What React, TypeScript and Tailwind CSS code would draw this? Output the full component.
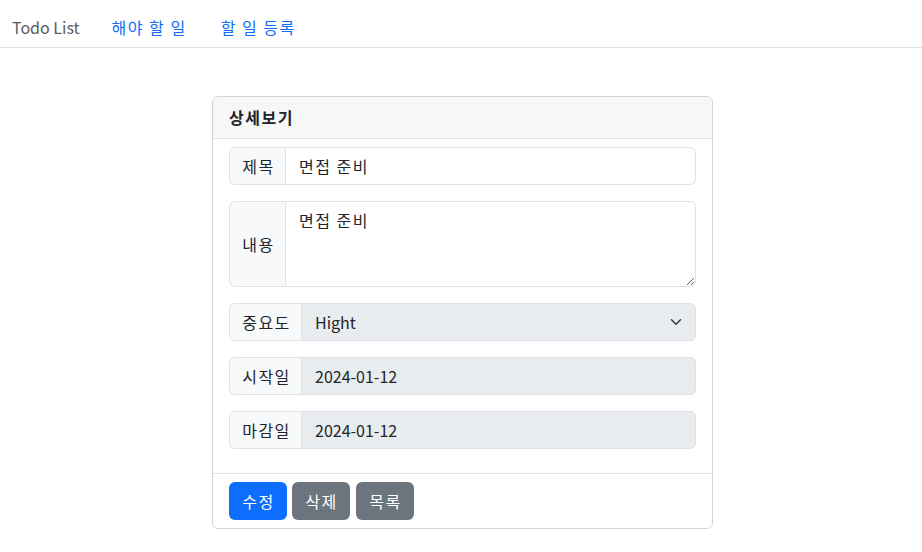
import React from "react";

const font = { fontFamily: '"Noto Sans CJK KR", "Noto Sans", sans-serif' };
const ko = { fontFamily: '"Noto Sans CJK KR", "Noto Sans", sans-serif', letterSpacing: "1.5px" };

function Chevron() {
  return (
    <svg width="16" height="12" viewBox="0 0 16 16" className="pointer-events-none absolute right-[12px] top-1/2 -translate-y-1/2">
      <path d="m2 5 6 6 6-6" fill="none" stroke="#343a40" strokeWidth="2" strokeLinecap="round" strokeLinejoin="round" />
    </svg>
  );
}

function Label({ children, w }: { children: React.ReactNode; w: string }) {
  return (
    <div
      className={`flex items-center justify-center ${w} shrink-0 border border-[#dee2e6] bg-[#f8f9fa] rounded-l-[6px] pl-[13px] pr-[11px] text-[16px] leading-[24px] text-[#212529] whitespace-nowrap`}
      style={ko}
    >
      {children}
    </div>
  );
}

export default function App() {
  return (
    <div className="min-h-[552px] bg-white text-[#212529]" style={font}>
      <nav className="flex items-start h-[48px] border-b border-[#dee2e6] pt-[15px] pl-[12px] text-[16px] leading-[24px]">
        <span className="text-[#595c5f]">Todo List</span>
        <a className="ml-[32px] text-[#0d6efd]" style={ko}>해야 할 일</a>
        <a className="ml-[34px] text-[#0d6efd]" style={ko}>할 일 등록</a>
      </nav>

      <div className="flex justify-center pl-[3px]">
        <div className="w-[501px] mt-[48px] border border-[#d3d4d5] rounded-[6px] overflow-hidden">
          <div className="h-[42px] bg-[#f7f7f8] border-b border-[#dee2e6] px-[16px] py-[8px] text-[16px] leading-[24px] font-bold" style={ko}>
            상세보기
          </div>
          <div className="px-[16px] pt-[8px] pb-[8px] flex flex-col gap-[16px]">
            <div className="flex h-[38px]">
              <Label w="w-[57px]">제목</Label>
              <input
                readOnly
                value="면접 준비"
                className="flex-1 min-w-0 border border-l-0 border-[#dee2e6] rounded-r-[6px] px-[13px] text-[16px] leading-[24px] text-[#212529] bg-white outline-none"
                style={ko}
              />
            </div>
            <div className="flex h-[86px]">
              <Label w="w-[57px]">내용</Label>
              <textarea
                readOnly
                value="면접 준비"
                className="flex-1 min-w-0 border border-l-0 border-[#dee2e6] rounded-r-[6px] px-[13px] py-[6px] text-[16px] leading-[24px] text-[#212529] bg-white outline-none"
                style={ko}
              />
            </div>
            <div className="flex h-[38px]">
              <Label w="w-[73px]">중요도</Label>
              <div className="relative flex-1 min-w-0">
                <select
                  disabled
                  className="w-full h-full appearance-none border border-l-0 border-[#dee2e6] rounded-r-[6px] pl-[13px] pr-[36px] text-[16px] leading-[24px] text-[#212529] bg-[#e9ecef] opacity-100 outline-none"
                  style={font}
                >
                  <option>Hight</option>
                </select>
                <Chevron />
              </div>
            </div>
            <div className="flex h-[38px]">
              <Label w="w-[73px]">시작일</Label>
              <input
                disabled
                value="2024-01-12"
                className="flex-1 min-w-0 border border-l-0 border-[#dee2e6] rounded-r-[6px] px-[13px] text-[16px] leading-[24px] text-[#212529] bg-[#e9ecef] opacity-100 outline-none"
                style={font}
              />
            </div>
            <div className="flex h-[38px] mb-[16px]">
              <Label w="w-[73px]">마감일</Label>
              <input
                disabled
                value="2024-01-12"
                className="flex-1 min-w-0 border border-l-0 border-[#dee2e6] rounded-r-[6px] px-[13px] text-[16px] leading-[24px] text-[#212529] bg-[#e9ecef] opacity-100 outline-none"
                style={font}
              />
            </div>
          </div>
          <div className="border-t border-[#dee2e6] px-[16px] py-[8px] flex gap-[5px]">
            <button className="h-[38px] w-[58px] rounded-[6px] bg-[#0d6efd] text-white text-[16px] leading-[24px] pl-[1px]" style={ko}>수정</button>
            <button className="h-[38px] w-[58px] rounded-[6px] bg-[#6c757d] text-white text-[16px] leading-[24px] pl-[1px]" style={ko}>삭제</button>
            <button className="h-[38px] w-[58px] ml-[1px] rounded-[6px] bg-[#6c757d] text-white text-[16px] leading-[24px] pl-[1px]" style={ko}>목록</button>
          </div>
        </div>
      </div>
    </div>
  );
}
